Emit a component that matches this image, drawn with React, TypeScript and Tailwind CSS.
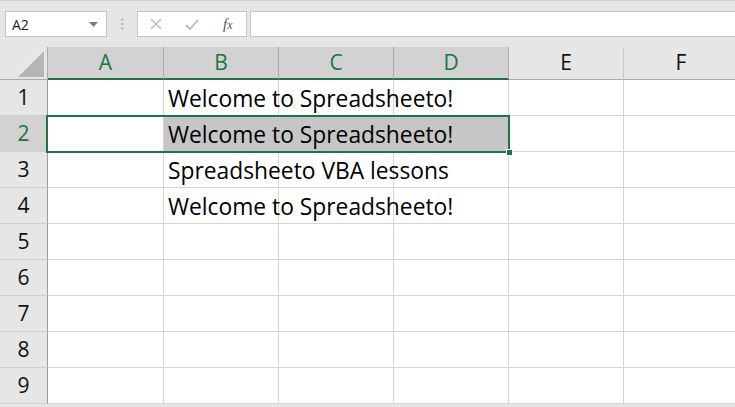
import React from 'react';

const COLS = ['A', 'B', 'C', 'D', 'E', 'F'];
const SELECTED_COLS = ['A', 'B', 'C', 'D'];
const ROWS = [1, 2, 3, 4, 5, 6, 7, 8, 9];

// text that spills over from column B
const CELL_TEXT: Record<number, string> = {
  1: 'Welcome to Spreadsheeto!',
  2: 'Welcome to Spreadsheeto!',
  3: 'Spreadsheeto VBA lessons',
  4: 'Welcome to Spreadsheeto!',
};

const font = { fontFamily: '"Open Sans", "Noto Sans", sans-serif' };

function Toolbar() {
  return (
    <div className="h-[47px] border-t border-[#d0d0d0] flex items-start pt-[10px]">
      {/* name box */}
      <div className="ml-[5px] w-[102px] h-[26px] bg-white border border-[#c6c6c6] flex items-center pl-[6px] pr-[8px]">
        <span className="text-[14px] text-[#222] flex-1">A2</span>
        <svg width="9" height="5" viewBox="0 0 9 5">
          <path d="M0 0 H9 L4.5 5 Z" fill="#7a7a7a" />
        </svg>
      </div>
      <div className="w-[30px] h-[26px] flex items-center justify-center">
        <svg width="3" height="12" viewBox="0 0 3 12">
          <circle cx="1.5" cy="1.5" r="1" fill="#a8a8a8" />
          <circle cx="1.5" cy="6" r="1" fill="#a8a8a8" />
          <circle cx="1.5" cy="10.5" r="1" fill="#a8a8a8" />
        </svg>
      </div>
      {/* cancel / enter / fx */}
      <div className="w-[110px] h-[26px] bg-white border border-[#c6c6c6] flex items-center">
        <svg className="ml-[12px]" width="12" height="12" viewBox="0 0 12 12">
          <path d="M1 1 L11 11 M11 1 L1 11" stroke="#b8b8b8" strokeWidth="1.4" />
        </svg>
        <svg className="ml-[23px]" width="14" height="11" viewBox="0 0 14 11">
          <path d="M1 6 L5 10 L13 1" stroke="#b8b8b8" strokeWidth="1.8" fill="none" />
        </svg>
        <span
          className="ml-[24px] text-[15px] italic text-[#555]"
          style={{ fontFamily: '"Liberation Serif", serif' }}
        >
          f<span className="text-[12px]">x</span>
        </span>
      </div>
      <div className="ml-[3px] flex-1 h-[26px] bg-white border border-r-0 border-[#c6c6c6]" />
    </div>
  );
}

function ColumnHeader({ col }: { col: string }) {
  const selected = SELECTED_COLS.includes(col);
  return (
    <div
      className={`h-[33px] flex items-center justify-center text-[21px] border-r ${
        selected
          ? 'bg-[#d2d2d2] text-[#217346] border-[#ababab] border-b-2 border-b-[#217346]'
          : 'bg-[#e6e6e6] text-[#111] border-[#c8c8c8] border-b border-b-[#ababab]'
      }`}
    >
      {col}
    </div>
  );
}

export default function App() {
  return (
    <div className="w-[735px] h-[407px] overflow-hidden bg-[#e6e6e6]" style={font}>
      <Toolbar />

      <div className="relative grid grid-cols-[48px_116px_115px_115px_115px_115px_115px]">
        {/* corner */}
        <div className="h-[33px] border-r border-b border-[#ababab] flex items-end justify-end pr-[3px] pb-[2px]">
          <svg width="26" height="26" viewBox="0 0 26 26">
            <path d="M26 0 V26 H0 Z" fill="#b5b5b5" />
          </svg>
        </div>
        {COLS.map((c) => (
          <ColumnHeader key={c} col={c} />
        ))}

        {ROWS.map((r) => (
          <React.Fragment key={r}>
            <div
              className={`h-[36px] flex items-center justify-center text-[21px] border-r border-r-[#9b9b9b] border-b border-b-[#cfcfcf] ${
                r === 2 ? 'bg-[#d2d2d2] text-[#217346]' : 'bg-[#e6e6e6] text-[#111]'
              }`}
            >
              {r}
            </div>
            {COLS.map((c) => {
              const inRange = r === 2 && ['B', 'C', 'D'].includes(c);
              const text = c === 'B' ? CELL_TEXT[r] : undefined;
              return (
                <div
                  key={c}
                  className={`relative h-[36px] border-b border-[#d4d4d4] ${
                    inRange ? 'bg-[#c6c6c6]' : 'bg-white'
                  } ${inRange && c !== 'D' ? 'border-r border-r-[#c6c6c6]' : 'border-r border-r-[#d4d4d4]'}`}
                >
                  {text && (
                    <span className="absolute left-[4px] top-[2px] z-10 whitespace-nowrap text-[22.8px] leading-[33px] text-black">
                      {text}
                    </span>
                  )}
                </div>
              );
            })}
          </React.Fragment>
        ))}

        {/* selection A2:D2 */}
        <div className="absolute left-[46px] top-[68px] w-[464px] h-[38px] border-2 border-[#217346] z-20 pointer-events-none">
          <div className="absolute -right-[5px] -bottom-[5px] w-[7px] h-[7px] bg-[#217346] border border-white" />
        </div>
      </div>
    </div>
  );
}
